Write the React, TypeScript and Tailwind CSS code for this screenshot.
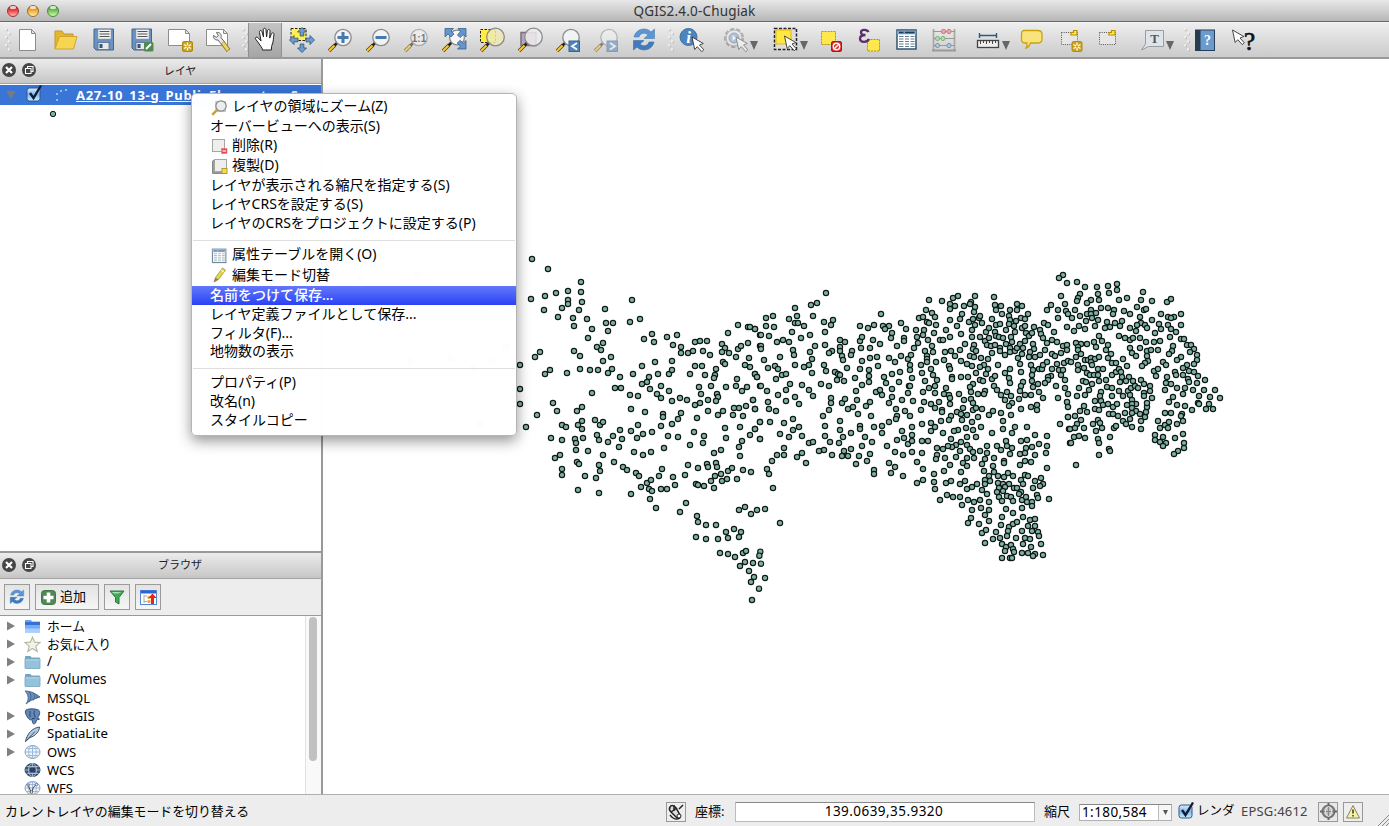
import { useState, type ReactNode } from "react";

type Tile = { x: number; y: number; points: string };

/* Point layer, stored per tile: tile origin in pixels, points in thirds of a pixel. */
const TILES: Tile[] = [
  {
    x: 510,
    y: 240,
    points:
      "66,57 114,87 213,126 174,153 138,159 105,168 213,156 63,177 174,180 174,192 216,186 156,204 102,210 207,210 144,231 189,234 231,237 192,258 246,267 234,294 285,207 366,180 288,249 309,249 360,246 390,237 294,273 279,309 261,321 273,330 192,333 210,348 90,336 75,351 30,375 303,351 279,363 120,390 105,402 171,399 210,387 240,390 264,390 306,387 294,399 330,411 315,444 333,444 246,459 30,447 30,492 129,489 141,513 81,525 48,561 216,501 201,513 216,543 204,555 216,567 156,555 168,561 255,540 270,555 279,546 261,585 267,600 123,594 156,600 195,597 219,594 198,609 198,630 234,633 150,645 135,654 201,666 207,672 156,687 156,705 225,708 258,714 267,675 270,693 279,645 204,750 267,759 309,588 294,606 330,570 336,597 327,621 312,666 339,681 351,690 363,762 363,573 381,594 399,582 384,555 372,636 399,645 423,636 426,576 462,624 378,699 387,708 411,729 423,720 393,741 417,747 426,753 447,708 456,687 453,747 471,747 495,735 489,711 525,705 420,777 438,804 528,789 510,816 426,282 402,297 432,306 471,291 501,285 489,315 513,321 513,339 534,339 549,333 555,306 570,303 591,303 579,333 600,345 636,312 645,324 636,336 657,339 654,279 684,255 714,261 735,267 750,285 684,327 693,318 714,309 750,318 678,351 717,354 705,375 720,381 735,402 741,411 639,366 645,372 486,363 435,366 396,378 369,402 444,402 477,402 486,390 417,411 411,426 396,432 420,447 453,438 441,462 453,474 477,453 360,465 384,468 363,507 405,516 459,522 459,531 486,483 510,474 531,480 540,402 555,378 576,378 585,405 618,387 615,405 612,414 603,438 567,441 573,462 621,462 624,471 618,483 594,480 570,489 555,495 594,513 561,534 513,519 504,537 486,552 453,558 474,588 504,591 552,576 582,588 579,609 540,615 648,441 678,438 711,441 696,453 681,417 729,480 708,498 687,504 672,504 639,513 624,525 669,525 699,528 735,507 645,564 690,561 648,594 720,585 735,567 750,546 696,603 687,621 690,648 633,630 612,639 534,675 564,684 591,672 594,681 618,669 621,681 654,693 666,684 633,702 615,708 603,723 636,723 651,717 681,717 699,690 723,696 558,732 564,735 582,738 612,744 561,828 564,846 588,855 618,855 558,891 588,897 624,897 654,894 648,876 672,867 693,876 687,891 687,810 705,801 723,822 741,810 630,939 654,942 675,951 699,939 708,933 690,978 705,966 729,969 717,993 732,1011 723,1026 747,1046 726,1080 751,935 748,947 753,971 765,1014 765,807 810,849 750,438 750,597",
  },
  {
    x: 750,
    y: 280,
    points:
      "228,39 183,75 201,69 135,84 48,114 69,108 117,117 141,108 189,108 135,129 144,129 162,138 48,138 72,141 33,165 57,168 126,156 153,174 180,165 81,186 99,180 117,186 33,198 33,207 129,210 132,225 195,198 180,216 186,237 90,231 42,240 54,264 75,258 84,267 135,255 162,261 177,255 186,279 96,285 108,282 78,297 33,318 51,333 120,312 108,330 156,315 177,330 189,348 84,345 108,363 135,351 147,372 54,366 57,387 78,393 30,426 60,426 102,429 129,417 147,441 129,450 117,471 90,462 30,477 156,468 102,504 81,525 102,525 66,543 51,567 57,582 69,624 141,531 156,519 168,549 177,489 189,486 222,126 249,120 243,135 225,156 225,195 270,180 285,186 270,201 270,213 246,213 237,219 276,228 279,240 306,213 303,225 222,255 228,273 255,276 264,282 270,285 261,300 282,303 291,264 315,294 213,312 237,318 243,354 243,369 237,390 219,408 225,438 225,468 276,369 285,357 294,387 309,381 321,360 318,333 336,315 324,402 363,408 348,378 360,366 270,423 270,450 279,471 303,459 240,486 267,489 246,525 222,510 207,513 276,528 282,513 294,528 303,507 327,528 336,498 345,471 330,438 330,447 366,486 360,522 351,543 318,552 372,570 372,582 372,441 396,438 396,459 417,426 330,138 354,144 372,135 393,102 399,138 417,138 405,147 426,159 423,174 453,129 468,147 462,174 462,183 441,198 330,183 336,171 333,204 360,204 369,180 390,192 336,243 360,234 381,231 417,234 435,246 453,228 474,237 330,267 357,270 384,258 357,288 357,306 402,291 408,309 426,282 450,276 447,306 426,327 477,318 378,336 390,330 396,345 426,351 417,369 456,360 474,339 438,387 465,393 441,408 438,417 411,498 441,480 456,453 462,474 474,492 435,516 459,525 417,549 435,561 423,579 459,588 0,141 15,147 15,282 21,291 9,360 15,387 15,447",
  },
  {
    x: 910,
    y: 270,
    points:
      "459,15 447,24 471,39 453,78 423,105 411,120 444,120 465,102 468,123 444,144 474,132 471,171 57,90 96,93 129,84 144,78 195,78 252,81 120,102 135,108 120,117 162,108 183,96 180,102 195,111 192,126 48,120 66,129 75,141 27,144 39,141 51,156 57,159 78,165 120,150 156,132 150,147 141,168 177,156 189,147 207,144 210,138 216,159 195,165 186,180 255,105 273,108 258,120 276,132 300,120 321,102 336,108 321,120 246,147 297,138 300,150 318,153 333,144 345,147 354,132 258,165 270,162 297,162 312,168 18,180 42,180 72,189 21,201 39,195 108,180 54,210 90,210 99,210 120,201 153,192 186,201 210,201 228,186 237,174 255,186 258,198 267,201 279,204 225,213 237,204 231,225 243,228 255,225 288,180 315,186 303,201 306,216 288,222 270,234 270,243 285,255 300,234 300,246 315,243 321,234 336,174 345,168 348,189 357,198 366,189 372,171 390,180 393,192 399,204 402,159 414,165 432,186 345,213 330,222 339,234 369,222 372,237 360,246 357,261 375,261 390,255 405,240 411,219 426,210 441,216 459,228 471,225 471,240 24,219 12,234 66,228 69,246 45,243 51,258 51,267 51,276 3,255 33,285 0,285 78,276 105,246 123,243 135,258 150,240 165,222 192,225 189,237 198,243 180,258 192,261 102,270 153,273 171,282 186,288 213,264 234,267 246,249 264,285 222,285 210,291 234,297 228,312 198,309 117,288 120,297 63,297 36,309 69,315 81,330 45,333 6,324 0,300 126,321 126,327 153,321 174,321 210,330 219,333 246,327 255,318 300,297 285,309 297,324 300,339 333,306 330,282 324,264 336,252 363,285 369,300 366,315 387,297 396,297 399,285 411,276 426,252 435,258 453,249 441,282 426,297 447,300 459,300 462,279 474,273 453,315 465,330 423,318 414,321 414,330 405,339 384,342 366,333 369,351 339,336 333,348 189,342 180,351 183,366 204,372 225,363 222,372 252,348 261,360 273,375 291,366 303,378 285,390 306,399 297,408 330,363 327,387 345,375 363,375 387,366 399,384 363,411 381,405 381,420 333,417 438,348 465,354 444,384 474,372 471,396 474,411 474,441 39,366 57,354 75,348 108,354 75,369 102,372 117,375 120,384 120,402 147,372 162,390 183,387 189,399 9,393 0,348 42,396 63,402 75,414 87,396 33,420 96,420 96,426 159,414 141,426 153,432 171,435 189,420 198,414 216,417 204,441 237,435 249,423 273,429 303,435 123,438 0,438",
  },
  {
    x: 910,
    y: 410,
    points:
      "93,33 117,30 156,30 279,33 36,42 63,39 75,51 63,63 6,51 6,75 6,93 36,93 54,93 6,126 36,129 99,69 144,60 132,63 168,54 186,36 189,60 213,51 171,81 198,81 123,87 153,96 171,105 138,105 126,111 114,108 99,117 81,114 81,135 78,147 105,144 138,141 150,123 180,117 189,126 210,123 171,144 192,144 159,159 171,168 120,165 153,186 21,156 39,177 72,192 21,219 39,210 72,216 75,237 102,183 108,219 123,213 150,222 165,213 171,237 186,231 201,222 90,270 111,255 129,261 150,261 174,270 192,276 210,270 156,285 186,300 213,294 183,324 174,339 207,342 216,369 228,360 225,399 246,69 279,57 306,69 315,51 351,51 375,75 288,93 261,108 231,108 231,129 273,120 291,108 306,114 300,132 330,132 333,93 351,90 348,114 366,111 387,102 411,78 411,108 408,129 375,135 345,129 345,153 363,156 330,165 411,174 450,42 474,21 477,57 480,99 282,153 282,159 252,144 225,147 216,162 249,168 222,183 252,186 237,198 225,210 240,213 225,222 216,240 231,252 237,276 264,198 282,201 294,189 309,198 264,219 279,222 297,222 267,234 285,231 261,246 279,243 267,261 276,273 291,258 303,261 309,273 312,234 321,234 333,246 327,252 333,210 339,222 345,195 354,198 336,270 348,261 351,276 366,276 366,288 336,294 375,213 393,204 399,222 390,228 369,234 381,255 384,264 417,267 237,300 225,315 237,333 288,297 309,309 276,321 273,345 258,366 249,387 270,384 276,402 297,351 309,342 321,336 294,363 291,378 318,384 339,321 360,330 375,327 354,348 375,348 366,363 384,366 387,378 336,363 345,384 360,387 339,402 363,411 393,402 288,411 303,405 309,417 285,423 312,426 276,444 300,444 306,444 336,429 354,429 375,432 369,438 399,435",
  },
  {
    x: 1040,
    y: 260,
    points:
      "111,66 135,81 171,81 204,78 231,72 231,90 207,99 174,102 120,102 114,114 111,123 153,120 141,129 177,120 237,120 261,114 309,96 303,120 336,123 381,126 393,117 105,150 120,168 96,174 141,162 153,150 153,162 168,159 183,144 204,144 222,150 219,162 156,174 138,183 174,180 252,153 270,162 291,141 312,150 318,147 300,171 363,162 384,171 402,171 393,174 423,162 423,195 384,195 393,207 408,216 363,207 345,219 357,192 336,180 303,189 315,195 321,204 291,195 288,213 270,204 246,183 240,198 225,189 210,201 195,204 201,186 165,198 135,207 117,198 102,213 177,228 162,246 186,243 168,261 141,252 123,252 108,249 204,255 198,270 213,282 204,294 216,309 228,309 237,228 255,234 270,240 279,234 300,234 318,246 342,246 360,243 390,231 423,237 432,237 441,255 453,255 462,267 450,276 399,258 396,273 387,282 471,285 471,300 462,312 441,315 429,324 423,291 411,300 369,306 378,315 270,264 300,264 276,279 288,288 321,273 333,270 354,270 324,303 321,288 315,309 306,318 249,297 261,318 114,261 114,270 123,282 108,291 93,306 135,300 144,300 153,294 165,297 153,306 177,291 156,315 114,315 114,330 132,324 174,327 189,327 141,339 150,345 162,345 174,345 216,345 228,336 237,327 243,336 246,351 267,351 240,366 258,363 279,363 303,360 312,372 330,378 330,393 312,399 312,408 336,414 342,333 354,327 348,348 381,351 405,336 408,345 429,345 447,333 462,336 444,357 447,366 474,348 471,369 495,360 378,369 393,372 375,390 411,384 435,384 429,402 459,390 492,390 525,390 477,408 510,411 540,414 474,429 477,432 507,432 498,447 519,447 456,450 435,438 411,435 387,426 399,411 129,363 138,366 156,372 177,363 198,360 147,390 117,384 111,408 135,405 183,396 180,408 201,381 216,384 216,408 237,393 249,408 264,393 270,405 273,384 285,378 294,384 276,420 288,432 276,432 261,435 276,444 288,453 276,459 255,459 270,477 249,483 258,492 276,501 303,507 303,483 300,462 315,471 318,456 321,441 321,429 165,423 183,423 189,435 204,432 219,441 231,432 132,438 120,453 141,456 105,468 165,447 177,450 207,462 219,462 234,468 123,480 111,492 90,507 105,504 132,504 159,492 174,480 180,489 186,504 168,513 222,504 228,498 102,531 117,528 135,534 93,549 174,537 177,549 210,531 207,567 210,573 177,585 108,615 354,483 375,459 393,459 426,462 423,468 429,483 411,492 375,495 387,486 384,504 360,504 345,525 345,540 369,531 360,546 378,549 369,558 405,534 429,522 432,549 432,564 414,573 402,582",
  },
  {
    x: 185,
    y: 88,
    points: "528,572 696,557 908,600 930,645 963,776 922,821 864,840 798,812 675,818 884,1008",
  },
];

const DOTS = TILES.flatMap((t) =>
  t.points.split(" ").map((p) => {
    const [a, b] = p.split(",").map(Number);
    return [t.x + a / 3 - 323, t.y + b / 3 - 59];
  })
);

const Svg = ({ children, s = 28, v = "0 0 28 28" }: { children: ReactNode; s?: number; v?: string }) => (
  <svg width={s} height={s} viewBox={v} fill="none" className="block shrink-0">
    {children}
  </svg>
);

const Slot = ({ children }: { children: ReactNode }) => (
  <div className="flex w-[38px] shrink-0 items-center justify-center">{children}</div>
);

const Grip = () => (
  <svg width="6" height="24" viewBox="0 0 6 24" className="block shrink-0">
    {[0, 1, 2, 3, 4, 5].map((i) => (
      <g key={i}>
        <circle cx={i % 2 ? 4.5 : 1.5} cy={2 + i * 4} r="1.3" fill="#a9a9a9" />
        <circle cx={i % 2 ? 4 : 1} cy={1.5 + i * 4} r="1.2" fill="#f4f4f4" />
      </g>
    ))}
  </svg>
);

const Caret = () => (
  <svg width="8" height="9" viewBox="0 0 8 9" className="mt-[11px] block shrink-0">
    <path d="M0 0h8L4 9z" fill="#666" />
  </svg>
);

const Page = () => <path d="M2.500 3.500h17l4 4v12h-21z M19.500 3.500v4h4" fill="#fff" stroke="#8c8c8c" />;

const Spark = ({ x = 16, y = 15 }: { x?: number; y?: number }) => (
  <g transform={`translate(${x} ${y})`}>
    <rect x=".5" y=".5" width="10" height="10" rx="1.5" fill="#cda31c" stroke="#b08a0c" />
    <path d="M5.500 1.500v8M2 3.500l7 4M9 3.500l-7 4" stroke="#fff" strokeWidth="1.300" />
    <circle cx="5.500" cy="5.500" r="1.200" fill="#cda31c" />
  </g>
);

const Lens = ({ children, tint = "#f4f6f7", big = false, solid = false }: { children?: ReactNode; tint?: string; big?: boolean; solid?: boolean }) => (
  <g>
    <path d="M3 25l6-6" stroke="#4b3b10" strokeWidth="3.600" />
    <path d="M3 25l6-6" stroke="#fac72c" strokeWidth="2.200" />
    <path d="M8.500 19.500l3-3" stroke="#222" strokeWidth="2.600" />
    <circle cx={big ? 17.5 : 17} cy={big ? 11 : 11.5} r={big ? 8.8 : solid ? 7.4 : 8.2} fill={tint} fillOpacity={solid ? 1 : 0.85} stroke="#8a8a8a" strokeWidth="1.300" />
    {children}
  </g>
);

const Refresh = () => (
  <g>
    <path d="M4 11C6 2 17 1 21 6l3.500-3v9.500H14l4-3.500c-3-3-8-2-9 2z" fill="#5b96d2" stroke="#477fb9" strokeWidth=".6" />
    <path d="M24 16c-2 9-13 10-17 5l-3.500 3v-9.500H14l-4 3.500c3 3 8 2 9-2z" fill="#3f7bbd" stroke="#3b70a9" strokeWidth=".6" />
  </g>
);

const Arrow = ({ x = 13, y = 10 }: { x?: number; y?: number }) => (
  <path transform={`translate(${x} ${y})`} d="M0 0l2.700 12.500 2.600-2.800 4.500 5 2-1.900-4.300-4.800 3.800-1.500z" fill="#fff" stroke="#333" strokeWidth=".9" />
);

const Floppy = () => (
  <g>
    <path d="M4 3h19.500v21H6l-2-2z" fill="#6a93c2" stroke="#40658f" />
    <rect x="8" y="3.500" width="13" height="9.500" fill="#f2f2f0" stroke="#8095ac" strokeWidth=".5" />
    <path d="M9.500 5.500h10M9.500 8h10M9.500 10.500h10" stroke="#555" strokeWidth="1.200" />
    <rect x="8" y="16.500" width="11" height="7" fill="#e9e9e6" stroke="#4a6282" strokeWidth=".7" />
    <rect x="9.500" y="18" width="3" height="4" fill="#2f5680" />
  </g>
);

const Table = () => (
  <g>
    <rect x="4" y="4" width="19" height="19" fill="#fff" stroke="#2f5370" strokeWidth="1.500" />
    <path d="M4 6.500h19" stroke="#7aa2d2" strokeWidth="3.600" />
    <path d="M6 6.500h4.500M12 6.500h9.500" stroke="#193a59" strokeWidth="1.300" />
    <path d="M6 10.500h4.500M12 10.500h4M17.500 10.500h4M6 13h4.500M12 13h4M17.500 13h4M6 15.500h4.500M12 15.500h4M17.500 15.500h4M6 18h4.500M12 18h4M17.500 18h4M6 20.500h4.500M12 20.500h4M17.500 20.500h4" stroke="#4d7186" strokeWidth=".9" />
  </g>
);

const Toolbar = () => (
  <div className="flex h-[37px] shrink-0 items-center overflow-hidden border-b-2 border-[#9a9a9a] border-t border-t-[#f5f5f5] bg-gradient-to-b from-[#eeeeee] to-[#cbcbcb]">
    <div className="flex w-[13px] shrink-0 justify-end pr-0.5"><Grip /></div>
    <div className="flex w-[34px] shrink-0 items-center">
      <Svg><path d="M6.500 3.500h12l4 4v17h-16z M18.500 3.500v4h4" fill="#fff" stroke="#8c8c8c" /></Svg>
    </div>
    <Slot><Svg>
      <path d="M3 23V5h7l2 3h9v4" fill="#e6b52b" stroke="#c6962a" />
      <path d="M3 23L7.500 10.500h17.500L21.500 23z" fill="#f7d550" stroke="#cfa535" />
    </Svg></Slot>
    <Slot><Svg><Floppy /></Svg></Slot>
    <Slot><Svg><Floppy /><rect x="16" y="16" width="9.500" height="9.500" rx="1.500" fill="#4f8a55" /><path d="M18 23l5-5" stroke="#fff" strokeWidth="2" /></Svg></Slot>
    <Slot><Svg><Page /><Spark x={16} y={15} /></Svg></Slot>
    <Slot><Svg>
      <Page />
      <path d="M12.500 6.500c3-.6 5.500 1.800 4.500 5l3.500 4.500-3 2.500-3.500-4.500c-3 .4-5-2-4.500-4.500l2.800 1.800 2-1.600z" fill="#e6e8ea" stroke="#555" strokeWidth=".9" />
      <path d="M18.500 16.500l6 8" stroke="#8a7423" strokeWidth="4.600" />
      <path d="M18.700 16.700l5.400 7.300" stroke="#edd367" strokeWidth="3" />
    </Svg></Slot>
    <div className="flex w-[11px] shrink-0 justify-end"><Grip /></div>
    <div className="flex h-full w-[34px] shrink-0 items-center justify-center border-x border-[#8f8f8f] bg-gradient-to-b from-[#c4c4c4] to-[#a6a6a6]">
      <Svg><path transform="translate(1.500 0)" d="M10 24c0-2-2-4-4-7s-3.500-4-3-5.200c.7-1.400 2.700-.3 3.700 1.200L8.500 15 7 6.500C6.700 4 9 3.700 9.600 6l1.400 5-.3-7c0-2.300 2.600-2.300 2.800 0l.6 7 .8-6.200c.3-2 2.700-1.700 2.600.3l-.3 7 1.700-4.300c.8-1.800 3-1 2.500 1-.6 3-.4 7-1.500 9.200-.7 1.400-1 3-1 6z" fill="#fff" stroke="#222" strokeWidth="1" /></Svg>
    </div>
    <div className="ml-px flex w-[38px] shrink-0 justify-center"><Svg>
      <rect x="3" y="2.500" width="15" height="12" fill="#fff04e" stroke="#222" strokeDasharray="2.500 1.500" />
      <path d="M14 1.500l4.500 4.500h-2.700v4h-3.600V6H9.500zM14 26.500l4.500-4.500h-2.700v-4h-3.600v4H9.500zM1.500 14L6 9.500v2.700h4v3.600H6v2.700zM26.500 14L22 9.500v2.700h-4v3.600h4v2.700z" fill="#6f9bce" stroke="#375a84" strokeWidth=".9" />
    </Svg></div>
    <Slot><Svg><Lens><path d="M17 6v11M11.500 11.500h11" stroke="#4679ae" strokeWidth="3" /></Lens></Svg></Slot>
    <Slot><Svg><Lens><path d="M11.500 11.500h11" stroke="#4679ae" strokeWidth="3" /></Lens></Svg></Slot>
    <Slot><div className="opacity-60"><Svg><Lens /><text x="17" y="15.500" fontSize="10" fontWeight="bold" textAnchor="middle" fill="#333" fontFamily="Liberation Sans">1:1</text></Svg></div></Slot>
    <Slot><Svg>
      <Lens solid />
      <path d="M5 2.500h8.500L11 5l3 3-3 3-3-3-3 3zM26 2.500V11l-2.500-2.500-3.500 3-2.500-2.500 3-3.500-2.500-3zM26 23h-8.500l2.700-2.700-3-3.300 3-2.700 3 3L26 14.500z" fill="#6496cb" stroke="#376192" strokeWidth=".8" />
    </Svg></Slot>
    <Slot><Svg><rect x="2.500" y="3.500" width="15" height="13" fill="#ffee3c" stroke="#222" strokeDasharray="2.500 1.500" /><Lens tint="#efe9b5" big /></Svg></Slot>
    <Slot><Svg><rect x="5" y="6.500" width="15" height="13" fill="#b6a5b5" stroke="#7b6d7b" strokeWidth="1.500" /><Lens tint="#eeebed" big /></Svg></Slot>
    <Slot><Svg><Lens /><rect x="15" y="15" width="10.500" height="10.500" fill="#5084b8" stroke="#386494" /><path d="M23 17l-5 3.300 5 3.200" stroke="#fff" strokeWidth="1.800" /></Svg></Slot>
    <Slot><div className="opacity-50"><Svg><Lens /><rect x="15" y="15" width="10.500" height="10.500" fill="#5084b8" stroke="#386494" /><path d="M18 17l5 3.300-5 3.200" stroke="#fff" strokeWidth="1.800" /></Svg></div></Slot>
    <Slot><Svg><Refresh /></Svg></Slot>
    <div className="flex w-[9px] shrink-0 justify-center pl-[7px]"><Grip /></div>
    <Slot><Svg>
      <circle cx="11.500" cy="11" r="8.500" fill="#4c84bd" stroke="#44719e" />
      <text x="11.500" y="17" fontSize="17" fontStyle="italic" fontWeight="bold" textAnchor="middle" fill="#fff" fontFamily="Liberation Serif">i</text>
      <Arrow x={15} y={11} />
    </Svg></Slot>
    <div className="flex w-[52px] shrink-0 items-center pl-3">
      <div className="opacity-50"><Svg>
        <circle cx="12" cy="12" r="8.500" fill="#ddd" stroke="#777" strokeWidth="3" strokeDasharray="4 2" />
        <circle cx="12" cy="12" r="8" fill="#eee" stroke="#888" /><circle cx="12" cy="12" r="5" fill="#7da5d4" stroke="#4f7298" /><path d="M10.500 9l4 3-4 3z" fill="#fff" /><Arrow x={14} y={11} />
      </Svg></div><Caret />
    </div>
    <div className="flex w-[50px] shrink-0 items-center pl-[10px]">
      <Svg><rect x="2.500" y="2.500" width="22" height="21" stroke="#222" strokeWidth="1.500" strokeDasharray="3 1.500" fill="#ddd" /><rect x="4" y="4" width="15" height="14" fill="#ffe744" stroke="#dfb719" /><Arrow x={12.500} y={10} /></Svg><Caret />
    </div>
    <Slot><Svg>
      <rect x="4.500" y="5.500" width="14" height="13" fill="#ffe84c" stroke="#b5920f" strokeDasharray="2 1" />
      <rect x="14.500" y="15.500" width="10" height="10" rx="1.500" fill="#d62b2b" stroke="#b11" /><circle cx="19.500" cy="20.500" r="3.200" stroke="#fff" strokeWidth="1.400" /><path d="M17.500 22.500l4-4" stroke="#fff" strokeWidth="1.400" />
    </Svg></Slot>
    <Slot><Svg>
      <rect x="12.500" y="13.500" width="12" height="11.500" fill="#ffe84c" stroke="#b5920f" strokeDasharray="2 1" />
      <path d="M13.500 6C12 3 6 3 6 6.300 6 8.500 8.500 9 10.500 9 7.500 9 5 10.200 5 12.800c0 4 7.500 4 9 .2" stroke="#5b2e6b" strokeWidth="2.300" />
    </Svg></Slot>
    <div className="flex w-[37px] shrink-0 justify-center"><Svg><Table /></Svg></div>
    <Slot><Svg>
      <path d="M3.500 3v21.500M24.500 3v21.500" stroke="#aaa" strokeWidth="1.800" /><path d="M2 24.500h24" stroke="#999" strokeWidth="2" /><path d="M3 5.500h22M3 12.500h22M3 19.500h22" stroke="#999" />
      <g fill="#eba9ad" stroke="#cf7478"><circle cx="13.500" cy="5.500" r="2.100" /><circle cx="19" cy="5.500" r="2.100" /></g>
      <g fill="#b5dcb1" stroke="#7fae79"><circle cx="7.500" cy="12.500" r="2.100" /><circle cx="13" cy="12.500" r="2.100" /></g>
      <g fill="#afc8df" stroke="#7594b4"><circle cx="7.500" cy="19.500" r="2.100" /><circle cx="19" cy="19.500" r="2.100" /></g>
    </Svg></Slot>
    <div className="flex w-[50px] shrink-0 items-center pl-[11px]">
      <Svg><path d="M5.500 9.500h17M5.500 7v5M22.500 7v5" stroke="#285b85" strokeWidth="1.400" /><rect x="3.500" y="14.500" width="21" height="7" fill="#eee" stroke="#444" strokeWidth="1.300" /><path d="M6.500 15v3M9.500 15v2M12.500 15v3M15.500 15v2M18.500 15v3M21.500 15v2" stroke="#444" /></Svg><Caret />
    </div>
    <Slot><Svg><path d="M6.500 4.500h13c3 0 4.500 1.300 4.500 3.700v5c0 2.500-1.500 3.800-4.500 3.800h-7c-1 3-2.500 4.500-4.500 5 1-1.500 1.200-3 1-5H7c-2.500 0-3.500-1.300-3.500-3.800v-5c0-2.400.8-3.700 3-3.700z" fill="#f8e37c" stroke="#c9a30d" strokeWidth="1.300" /></Svg></Slot>
    <Slot><Svg><g transform="translate(1 0)"><rect x="4.500" y="6.500" width="16" height="12" stroke="#555" strokeDasharray="1 1.200" fill="#e6e6e6" /><path d="M16.500 4.500h3.500v4.500h-6V6.500h2.500z" fill="#ffe84c" stroke="#b98f00" strokeWidth="1.200" /><Spark x={14.500} y={15} /></g></Svg></Slot>
    <Slot><Svg><g transform="translate(1 0)"><rect x="4.500" y="6.500" width="16" height="12" stroke="#555" strokeDasharray="1 1.200" fill="#e6e6e6" /><path d="M16.500 4.500h3.500v4.500h-6V6.500h2.500z" fill="#ffe84c" stroke="#b98f00" strokeWidth="1.200" /></g></Svg></Slot>
    <div className="flex w-[50px] shrink-0 items-center pl-3">
      <Svg><path d="M6.500 4.500h18v16h-15l-7 3.500 4-6z" fill="#dde5eb" stroke="#979da2" /><text x="15.500" y="17" fontSize="13" fontWeight="bold" textAnchor="middle" fill="#555" fontFamily="Liberation Serif">T</text></Svg>
      <div className="-ml-px"><Caret /></div>
    </div>
    <div className="ml-[5px] flex w-[9px] shrink-0 justify-center"><Grip /></div>
    <div className="flex w-[27px] shrink-0 justify-center"><Svg>
      <rect x="4.500" y="4" width="19" height="20.500" fill="#6b9bcd" stroke="#273e58" /><rect x="4.500" y="4" width="5" height="20.500" fill="#273a50" />
      <text x="16.500" y="19" fontSize="14" fontWeight="bold" textAnchor="middle" fill="#fff" fontFamily="Liberation Serif">?</text>
    </Svg></div>
    <div className="ml-1.5 flex w-[38px] shrink-0 justify-center"><Svg><Arrow x={3.500} y={4} /><text x="20.500" y="23.500" fontSize="25" textAnchor="middle" fill="#111" stroke="#111" strokeWidth=".7" fontFamily="Liberation Serif">?</text></Svg></div>
  </div>
);

const DockTitle = ({ title, className }: { title: string; className: string }) => (
  <div className={`flex shrink-0 items-center border-b border-[#a4a4a4] bg-gradient-to-b from-[#ececec] to-[#c6c6c6] pb-0.5 ${className}`}>
    <svg width="38" height="16" viewBox="0 0 38 16" className="ml-px block">
      <circle cx="8" cy="8" r="7" fill="#464646" /><path d="M5 5l6 6M11 5l-6 6" stroke="#fff" strokeWidth="2.200" />
      <circle cx="28" cy="8" r="7" fill="#464646" /><path d="M26.500 6.500v-2h5.500v5h-2M24.500 6.500H30v5h-5.500z" fill="none" stroke="#fff" strokeWidth="1.100" />
    </svg>
    <div className="flex-1 text-center text-[11px] leading-none text-[#222]">{title}</div>
  </div>
);

const Check = () => (
  <svg width="17" height="18" viewBox="0 0 17 18" className="block shrink-0">
    <defs><linearGradient id="chk" x1="0" y1="0" x2="0" y2="1"><stop offset="0" stopColor="#dcecfb" /><stop offset=".5" stopColor="#7fb9ee" /><stop offset="1" stopColor="#c5effc" /></linearGradient></defs>
    <rect x="1" y="4" width="13" height="13" rx="2.500" fill="url(#chk)" stroke="#365689" />
    <path d="M4 9l3.500 5L15 1.500" fill="none" stroke="#101b35" strokeWidth="2.400" />
  </svg>
);

const MenuIcon = ({ name }: { name: string }) => {
  if (name === "zoom")
    return <Svg s={17}><rect x="8" y="4" width="16" height="17" fill="#ddd" stroke="#aaa" /><path d="M2 26l8-8" stroke="#c6a238" strokeWidth="4" /><circle cx="16.500" cy="11.500" r="8.500" fill="#ededed" fillOpacity=".9" stroke="#888" strokeWidth="2" /></Svg>;
  if (name === "table") return <div className="opacity-70"><Svg s={17} v="2 1 24 24"><Table /></Svg></div>;
  if (name === "pencil")
    return <Svg s={17} v="0 0 17 17"><path d="M3 15l1.500-4.500 7-9.500 3 2-7 9.500z" fill="#e5d64b" stroke="#9b933c" strokeWidth=".8" /><path d="M3 15l1.500-4.500 3 2z" fill="#8d806a" /><path d="M10 3l3 2" stroke="#fff" /></Svg>;
  return (
    <Svg s={17} v="0 0 17 17">
      {name === "copy" && <path d="M1.500 3v12.500H12l2-2H3.500V2z" fill="#9d9d98" stroke="#8a8a86" />}
      <rect x={name === "copy" ? 3.5 : 1.5} y="1.500" width="12" height="12" fill="#eeeeec" stroke="#a5a5a1" />
      {name === "remove" ? <><rect x="10.500" y="10.500" width="5.500" height="5" fill="#e5484a" stroke="#e77" strokeWidth=".6" /><path d="M11.500 13h3.500" stroke="#fff" strokeWidth="1.200" /></> : <rect x="11" y="10.500" width="5" height="5" fill="#f4dd55" stroke="#b6992b" />}
    </Svg>
  );
};

type MenuRow = { label?: string; icon?: string; h: string };
const MENU: MenuRow[] = [
  { label: "レイヤの領域にズーム(Z)", icon: "zoom", h: "h-5" },
  { label: "オーバービューへの表示(S)", h: "h-[19px]" },
  { label: "削除(R)", icon: "remove", h: "h-5" },
  { label: "複製(D)", icon: "copy", h: "h-5" },
  { label: "レイヤが表示される縮尺を指定する(S)", h: "h-[19px]" },
  { label: "レイヤCRSを設定する(S)", h: "h-[19px]" },
  { label: "レイヤのCRSをプロジェクトに設定する(P)", h: "h-[19px]" },
  { h: "h-3" },
  { label: "属性テーブルを開く(O)", icon: "table", h: "h-5" },
  { label: "編集モード切替", icon: "pencil", h: "h-[21px]" },
  { label: "名前をつけて保存...", h: "h-[19px]" },
  { label: "レイヤ定義ファイルとして保存...", h: "h-[19px]" },
  { label: "フィルタ(F)...", h: "h-[19px]" },
  { label: "地物数の表示", h: "h-[18px]" },
  { h: "h-3" },
  { label: "プロパティ(P)", h: "h-[19px]" },
  { label: "改名(n)", h: "h-[19px]" },
  { label: "スタイルコピー", h: "h-[19px]" },
];

const ContextMenu = ({ active, onPick }: { active: string; onPick: (s: string) => void }) => (
  <div className="absolute left-[191px] top-[93px] z-10 h-[343px] w-[326px] rounded-[5px] border border-[#b5b5b5] bg-white/[0.985] pt-[3px] text-[14px] leading-none text-black shadow-[0_5px_14px_rgba(0,0,0,0.42)]">
    {MENU.map((m, i) =>
      m.label ? (
        <div
          key={i}
          onClick={() => onPick(m.label!)}
          className={`flex items-center whitespace-pre pb-0.5 pl-[18px] ${m.h} ${m.label === active ? "bg-gradient-to-b from-[#6377fb] to-[#2c3ff5] font-medium text-white" : ""}`}
        >
          {m.icon && <span className="ml-px mr-[5px] mt-0.5 w-4"><MenuIcon name={m.icon} /></span>}
          {m.label}
        </div>
      ) : (
        <div key={i} className={`${m.h} pt-[7px]`}><div className="mx-px h-px bg-[#dedede]" /></div>
      )
    )}
  </div>
);

const Globe = ({ dark, v }: { dark?: boolean; v?: boolean }) => (
  <>
    <ellipse cx="8.500" cy="8" rx="7.500" ry="6.500" fill={dark ? "#3c577c" : "#edf4fb"} stroke={dark ? "#2e4565" : "#84a5ca"} />
    <path d="M8.500 1.500v13M1 8h15M2.500 4.500h12M2.500 11.500h12" stroke={dark ? "#b3c6da" : "#8eafd3"} strokeWidth=".8" />
    <ellipse cx="8.500" cy="8" rx="3.800" ry="6.500" stroke={dark ? "#b3c6da" : "#8eafd3"} strokeWidth=".8" />
    {dark && <path d="M5 5h7v6H5z" fill="#2c4162" stroke="#b3c6da" strokeWidth=".7" />}
    {v && <><path d="M4 5l3.500 8 2-6 3-2.500" stroke="#444" /><g fill="#fff" stroke="#555" strokeWidth=".8"><circle cx="4" cy="5" r="1.200" /><circle cx="7.500" cy="12" r="1.200" /><circle cx="12.500" cy="4.500" r="1.200" /></g></>}
  </>
);

const TreeIcon = ({ name }: { name: string }) => (
  <Svg s={17} v="0 0 17 17">
    {name === "home" && <><path d="M1 3.500V2h6l1 1.500h8v3H1z" fill="#6aa2ee" /><rect x="1" y="4" width="15" height="10.500" fill="#72acf5" /><path d="M1 5.500h15" stroke="#3770d4" strokeWidth="3" /><path d="M1 12.500h15" stroke="#a7d0ff" strokeWidth="4" /></>}
    {name === "star" && <path d="M8.500 1.200l2.100 5 5.400.4-4.200 3.500 1.400 5.300-4.700-2.900-4.700 2.900 1.400-5.300L1 6.600l5.400-.4z" fill="#f2f2e8" stroke="#b7b8a6" strokeWidth="1.200" />}
    {name === "folder" && <><path d="M1 4V2.500Q1 2 2 2h4.500l1 1.500H15q1 0 1 1v2H1z" fill="#73a5c4" /><rect x="1" y="4.500" width="15" height="10" rx=".5" fill="#94c2da" stroke="#72a4c1" strokeWidth=".8" /><path d="M1.500 6h14" stroke="#b1d5e6" /></>}
    {name === "mssql" && <path d="M1 1c6 0 11 3 15 6-4 1-10 3-14 7 3-4 3-9-1-13zM5 1.500c2.500 3 2.500 7.500 0 10.500M9 2.500c2 2.500 2 6 0 8M12.500 4.500c1.200 1.500 1 3.300 0 4.200" fill="#6c90ba" stroke="#3c6290" strokeWidth=".9" />}
    {name === "pg" && <><path d="M2 2c4-2 10-1 12.500 0 2.500 1.500.5 6-1 8.500l2 .5-3 1-1 3c-1 1.500-3 .8-3-.7l-.5-3c-1 1-2 .8-3-.3C3 9 0 4 2 2z" fill="#6487b4" stroke="#315480" /><path d="M6 3v6M10.500 2.500c-1 3 0 5 1 7M8 10.500h3" stroke="#284a76" /></>}
    {name === "feather" && <><path d="M1.500 15.500C3 8 8 2 15.500 1c0 4-4 9-9.500 10.500z" fill="#b4cbe2" stroke="#38516d" /><path d="M1.500 15.500L11 5.500" stroke="#38516d" /></>}
    {name === "ows" && <Globe />}
    {name === "wcs" && <Globe dark />}
    {name === "wfs" && <Globe v />}
  </Svg>
);

const TREE: [string, string, boolean, string][] = [
  ["ホーム", "home", true, "text-[12.8px]"],
  ["お気に入り", "star", true, "text-[12.8px]"],
  ["/", "folder", true, "text-[13.5px]"],
  ["/Volumes", "folder", true, "text-[13.5px]"],
  ["MSSQL", "mssql", false, "text-[13px]"],
  ["PostGIS", "pg", true, "text-[13px]"],
  ["SpatiaLite", "feather", true, "text-[13.200px]"],
  ["OWS", "ows", true, "text-[13px]"],
  ["WCS", "wcs", false, "text-[13px]"],
  ["WFS", "wfs", false, "text-[13px]"],
];

const BTN = "flex h-[26px] shrink-0 items-center border border-[#9b9b9b] bg-gradient-to-b from-[#e3e3e3] to-[#f6f6f6]";

const Browser = () => (
  <>
    <div className="flex h-[37px] shrink-0 items-center gap-[5px] border-b border-[#999] bg-[#ededed] pl-1">
      <button className={`${BTN} w-[26px] justify-center`}><Svg s={18}><Refresh /></Svg></button>
      <button className={`${BTN} w-16 gap-[4px] pl-[5px] text-[13px]`}>
        <svg width="15" height="15" viewBox="0 0 15 15"><rect x=".5" y=".5" width="14" height="14" rx="3" fill="#508957" stroke="#427649" /><path d="M7.500 2.500v10M2.500 7.500h10" stroke="#fff" strokeWidth="3.600" /></svg>
        追加
      </button>
      <button className={`${BTN} w-[26px] justify-center`}><Svg s={16} v="0 0 16 16"><path d="M1 2h14l-5 6.500V15l-3.500-2V8.500z" fill="#3fa95a" stroke="#27783b" /><path d="M2.500 3h10L9 4.500H5z" fill="#a4dfae" /></Svg></button>
      <button className={`${BTN} w-[26px] justify-center`}><Svg s={17} v="0 0 17 17"><rect x=".5" y="1.500" width="16" height="14" fill="#fff" stroke="#5486d4" /><path d="M1 3h15" stroke="#2964d8" strokeWidth="3" /><path d="M4 6v8M4 7h3M4 12.500h3" stroke="#aaa" /><path d="M7.500 8.500h3M7.500 12.500h3" stroke="#f19a20" strokeWidth="2.500" /><path d="M12.500 15V8" stroke="#ed2115" strokeWidth="3" /><path d="M8.500 9l4-4.500 4 4.500z" fill="#ed2115" /></Svg></button>
    </div>
    <div className="flex min-h-0 flex-1 overflow-hidden bg-white">
      <div className="flex-1 overflow-hidden pt-px">
        {TREE.map(([label, icon, open, size]) => (
          <div key={label} className={`flex h-[18px] items-center pl-[7px] leading-none ${size}`}>
            <svg width="8" height="10" viewBox="0 0 8 10" className={`mr-[9px] block ${open ? "" : "invisible"}`}><path d="M0 .5l8 4.500-8 4.500z" fill="#808080" /></svg>
            <TreeIcon name={icon} />
            <span className="ml-1.5 whitespace-nowrap">{label}</span>
          </div>
        ))}
      </div>
      <div className="w-[16px] border-l border-[#e2e2e2] bg-[#f9f9f9] pl-[3px] pt-px"><div className="h-36 w-2 rounded-full bg-[#c1c1c1]" /></div>
    </div>
  </>
);

const StatusBar = () => (
  <div className="relative flex h-8 shrink-0 items-center overflow-hidden border-t border-[#b0b0b0] bg-[#ededed] pl-[5px] pt-0.5 text-[13px] leading-none">
    <div className="w-[661px] shrink-0 whitespace-nowrap text-[12.900px]">カレントレイヤの編集モードを切り替える</div>
    <div className="flex h-5 w-5 shrink-0 items-center justify-center border border-[#999] bg-[#eee]">
      <Svg s={18} v="0 0 18 18"><path d="M3 4c1-2 4-2 6 1l4 7c1 3-1 4-3 3L4 9C2.500 7.500 2 5.500 3 4z" fill="#ddd" stroke="#222" strokeWidth="1.500" /><path d="M4 9l6-4M7 2v6M12 6l4-4M3 12c3 4 7 5 10 3" stroke="#222" strokeWidth="1.500" /><circle cx="12" cy="13" r="2" fill="#fff" stroke="#222" /></Svg>
    </div>
    <div className="ml-[9px] w-[40px] shrink-0 whitespace-nowrap">座標:</div>
    <div className="flex h-5 w-[300px] shrink-0 items-center justify-center border border-[#bbb] border-t-[#888] bg-white pr-0.5 text-[13.5px] tracking-[.45px]">139.0639,35.9320</div>
    <div className="ml-[9px] w-[35px] shrink-0">縮尺</div>
    <div className="mt-0.5 flex h-[17px] w-[93px] shrink-0 items-center border border-[#b0b0b0] border-t-[#888] bg-white pl-0.5 text-[13.5px]">
      <span className="flex-1 tracking-[.4px]">1:180,584</span>
      <span className="flex h-full w-[13px] items-center justify-center rounded-r border-l border-[#bbb] bg-[#f6f6f6]"><svg width="5" height="5" viewBox="0 0 5 5"><path d="M0 0h5L2.500 5z" fill="#555" /></svg></span>
    </div>
    <div className="-mt-1 ml-[6px]"><Check /></div>
    <div className="ml-0.5 w-[44px] shrink-0 whitespace-nowrap text-[12.500px]">レンダ</div>
    <div className="w-[77px] shrink-0 whitespace-nowrap tracking-[.2px] text-[#444]">EPSG:4612</div>
    <div className="flex h-5 w-5 shrink-0 items-center justify-center border border-[#999] bg-[#e8e8e8]">
      <Svg s={17} v="0 0 17 17"><circle cx="8.500" cy="8.500" r="6" fill="#bbb" stroke="#777" strokeWidth="2" /><path d="M8.500 0v4M8.500 13v4M0 8.500h4M13 8.500h4" stroke="#666" strokeWidth="2" /><path d="M8.500 3v11M3 8.500h11" stroke="#888" /><ellipse cx="8.500" cy="8.500" rx="3" ry="5" stroke="#eee" /></Svg>
    </div>
    <div className="ml-[5px] flex h-5 w-5 shrink-0 items-center justify-center border border-[#999] bg-[#eee]">
      <Svg s={16} v="0 0 16 16"><path d="M8 1.500l6.500 12.500h-13z" fill="#f6f2a7" stroke="#85845f" /><path d="M8 5.500v4M8 11v1.500" stroke="#333" strokeWidth="1.500" /></Svg>
    </div>
    <svg width="12" height="12" viewBox="0 0 12 12" className="ml-auto shrink-0 self-end"><path d="M1 12L12 1M5 12l7-7M9 12l3-3" stroke="#888" /></svg>
  </div>
);

const LIGHTS = [
  "from-[#9d2f35] via-[#f4444b] to-[#ffb4ad] border-[#92343a]",
  "from-[#b9751f] via-[#f5b040] to-[#fff09c] border-[#a16a25]",
  "from-[#4b8d3b] via-[#73c95d] to-[#d7f8a5] border-[#4a843e]",
];

export default function App() {
  const [picked, setPicked] = useState("名前をつけて保存...");
  return (
    <div className="relative flex h-[826px] w-[1389px] flex-col overflow-hidden bg-white font-['Noto_Sans','Noto_Sans_CJK_JP',sans-serif] text-black">
      <div className="flex h-[22px] shrink-0 items-center border-b border-[#696969] bg-gradient-to-b from-[#e8e8e8] to-[#b7b7b7]">
        <div className="flex w-[66px] gap-2 pl-[7px]">
          {LIGHTS.map((c) => (
            <div key={c} className={`relative h-3 w-3 rounded-full border bg-gradient-to-b ${c}`}><div className="absolute left-[2px] top-0 h-[3px] w-1.5 rounded-full bg-white/75" /></div>
          ))}
        </div>
        <div className="flex-1 pr-[66px] pt-0.5 text-center text-[13.500px] leading-none tracking-[.18px] text-[#333]">QGIS2.4.0-Chugiak</div>
      </div>
      <Toolbar />
      <div className="flex min-h-0 flex-1">
        <div className="flex w-[323px] shrink-0 flex-col border-r-2 border-[#999]">
          <DockTitle title="レイヤ" className="h-[25px]" />
          <div className="mt-px flex h-5 shrink-0 items-center bg-[#3974d7] pl-[6px]">
            <svg width="10" height="8" viewBox="0 0 10 8"><path d="M0 0h10L5 8z" fill="#79797e" /></svg>
            <div className="-mt-1 ml-[10px]"><Check /></div>
            <svg width="18" height="16" viewBox="0 0 18 16" className="ml-[11px]" fill="#b9d4ed"><circle cx="3" cy="7" r="1" /><circle cx="3" cy="13" r="1" /><circle cx="7" cy="4" r="1" /><circle cx="12" cy="3" r="1" /></svg>
            <span className="ml-1 whitespace-nowrap text-[13px] font-bold leading-none tracking-[.72px] text-white underline decoration-1">A27-10_13-g_PublicElementaryS</span>
          </div>
          <div className="flex-1 bg-white pl-[49px] pt-[5px]">
            <svg width="8" height="8" viewBox="0 0 8 8"><circle cx="4" cy="4" r="2.700" fill="#7fb1a4" stroke="#111" /></svg>
          </div>
          <div className="flex h-[243px] shrink-0 flex-col border-t-2 border-[#999]">
            <DockTitle title="ブラウザ" className="h-[26px]" />
            <Browser />
          </div>
        </div>
        <svg width="1066" height="735" viewBox="0 0 1066 735" className="block shrink-0 bg-white">
          <g fill="#7fb1a4" stroke="#101816" strokeWidth="1.150">
            {DOTS.map(([x, y], i) => (
              <circle key={i} cx={x} cy={y} r="2.650" />
            ))}
          </g>
        </svg>
      </div>
      <StatusBar />
      <ContextMenu active={picked} onPick={setPicked} />
    </div>
  );
}
